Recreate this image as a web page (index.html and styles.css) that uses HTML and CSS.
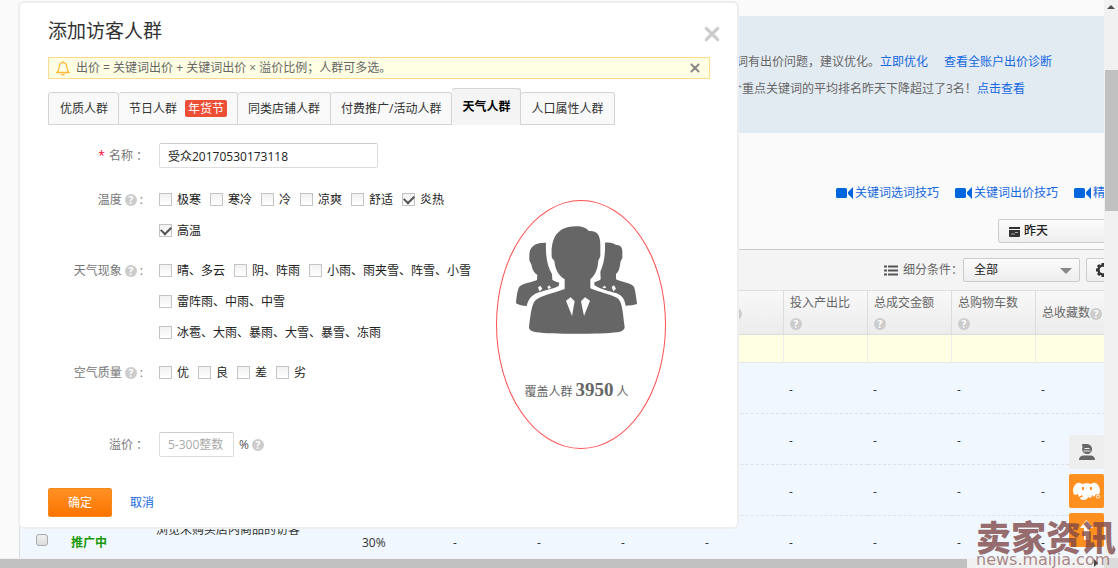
FILE: index.html
```html
<!DOCTYPE html>
<html lang="zh-CN">
<head>
<meta charset="utf-8">
<title>添加访客人群</title>
<link rel="stylesheet" href="styles.css">
</head>
<body>
<svg width="0" height="0" class="defs" aria-hidden="true">
  <symbol id="video" viewBox="0 0 17 12"><path d="M1.500 1h8q1.500 0 1.500 1.500v7q0 1.500-1.500 1.500h-8Q0 11 0 9.500v-7Q0 1 1.500 1zM17 0v12l-5-5V5z" fill="#06d"/></symbol>
  <symbol id="cross" viewBox="0 0 14 14"><path d="M2 2l10 10M12 2L2 12" stroke="currentColor" stroke-width="2.800" stroke-linecap="round"/></symbol>
</svg>
<div class="screen">
  <div class="viewport">
    <main class="page">
      <section class="banner">
        <p>词有出价问题，建议优化。<a href="#">立即优化</a><a href="#" class="next">查看全账户出价诊断</a></p>
        <p>个重点关键词的平均排名昨天下降超过了3名！<a href="#">点击查看</a></p>
      </section>
      <nav class="tips">
        <a href="#"><svg width="17" height="12"><use href="#video"/></svg>关键词选词技巧</a>
        <a href="#"><svg width="17" height="12"><use href="#video"/></svg>关键词出价技巧</a>
        <a href="#"><svg width="17" height="12"><use href="#video"/></svg>精</a>
      </nav>
      <div class="date-row">
        <button class="soft date"><svg width="11" height="11" viewBox="0 0 11 11"><path d="M0 1h11v2H0zM0 4h11v6q0 1-1 1H1q-1 0-1-1z" fill="#333"/><path d="M2 8h4M6 6.500h3" stroke="#aaa"/></svg>昨天</button>
      </div>
      <div class="toolbar">
        <label for="segment"><svg width="14" height="11" viewBox="0 0 14 11"><path d="M0 1.500h3M4 1.500h10M0 5.500h3M4 5.500h10M0 9.500h3M4 9.500h10" stroke="#555" stroke-width="2"/></svg><span>细分条件<span class="colon">：</span></span></label>
        <span class="select-box"><select id="segment" class="soft"><option>全部</option></select></span>
        <button class="soft gear" aria-label="设置"><svg width="16" height="16" viewBox="0 0 16 16"><circle cx="8" cy="8" r="4.500" fill="none" stroke="#333" stroke-width="2.500"/><path d="M8 1v2M8 13v2M1 8h2M13 8h2M3 3l1.500 1.500M11.500 11.500L13 13M3 13l1.500-1.500M11.500 4.500L13 3" stroke="#333" stroke-width="3"/></svg></button>
      </div>
      <table class="data">
        <colgroup><col class="c-check"><col class="c-state"><col class="c-name"><col class="c-bid"><col span="8" class="c-num"></colgroup>
        <thead><tr>
          <th></th><th></th><th></th><th></th><th></th><th></th><th></th><th class="tail"><i class="help">?</i></th>
          <th>投入产出比<br><i class="help">?</i></th><th>总成交金额<br><i class="help">?</i></th><th>总购物车数<br><i class="help">?</i></th><th class="single">总收藏数<i class="help">?</i></th>
        </tr></thead>
        <tbody>
          <tr class="sum"><td></td><td></td><td></td><td></td><td></td><td></td><td></td><td></td><td></td><td></td><td></td><td></td></tr>
          <tr><td></td><td></td><td></td><td></td><td></td><td></td><td></td><td></td><td>-</td><td>-</td><td>-</td><td>-</td></tr>
          <tr><td></td><td></td><td></td><td></td><td></td><td></td><td></td><td></td><td>-</td><td>-</td><td>-</td><td>-</td></tr>
          <tr><td></td><td></td><td></td><td></td><td></td><td></td><td></td><td></td><td>-</td><td>-</td><td>-</td><td>-</td></tr>
          <tr><td class="pick"><input type="checkbox" class="row-check" aria-label="选择推广"></td><td class="state">推广中</td><td class="name">浏览未购买店内商品的访客</td><td>30%</td><td>-</td><td>-</td><td>-</td><td>-</td><td>-</td><td>-</td><td>-</td><td>-</td></tr>
        </tbody>
      </table>
    </main>

    <section class="dialog" role="dialog" aria-labelledby="title">
      <header class="dialog-head">
        <h1 id="title">添加访客人群</h1>
        <button class="plain close" aria-label="关闭"><svg width="16" height="16" viewBox="0 0 14 14"><use href="#cross"/></svg></button>
      </header>
      <div class="notice">
        <svg width="14" height="16" viewBox="0 0 14 16" fill="none" stroke="#ffb83d" stroke-width="1.300"><path d="M7 1v1.500M1 12.500C3 11 3 9 3.200 6.500C3.500 4 5 2.700 7 2.700S10.500 4 10.800 6.500C11 9 11 11 13 12.500zM5.500 14q1.500 1.600 3 0"/></svg>
        <span>出价 = 关键词出价 + 关键词出价 × 溢价比例<span class="colon">；</span>人群可多选。</span>
        <button class="plain dismiss" aria-label="关闭提示"><svg width="10" height="10" viewBox="0 0 14 14"><use href="#cross"/></svg></button>
      </div>
      <div class="tabs" role="tablist">
        <button role="tab">优质人群</button>
        <button role="tab">节日人群<span class="badge">年货节</span></button>
        <button role="tab">同类店铺人群</button>
        <button role="tab">付费推广/活动人群</button>
        <button role="tab" class="active" aria-selected="true">天气人群</button>
        <button role="tab">人口属性人群</button>
      </div>
      <form class="body">
        <div class="fields">
          <div class="field name-field"><label class="label" for="name"><b class="req">*</b>名称<span class="colon">：</span></label><input id="name" class="text" type="text" value="受众20170530173118"></div>
          <div class="field" role="group" aria-label="温度"><span class="label hinted">温度<i class="help">?</i>:</span>
            <div class="options">
              <label><input type="checkbox">极寒</label><label><input type="checkbox">寒冷</label><label><input type="checkbox">冷</label><label><input type="checkbox">凉爽</label><label><input type="checkbox">舒适</label><label><input type="checkbox" checked>炎热</label><label><input type="checkbox" checked>高温</label>
            </div></div>
          <div class="field" role="group" aria-label="天气现象"><span class="label hinted">天气现象<i class="help">?</i>:</span>
            <div class="options">
              <label><input type="checkbox">晴、多云</label><label><input type="checkbox">阴、阵雨</label><label><input type="checkbox">小雨、雨夹雪、阵雪、小雪</label><label><input type="checkbox">雷阵雨、中雨、中雪</label><label><input type="checkbox">冰雹、大雨、暴雨、大雪、暴雪、冻雨</label>
            </div></div>
          <div class="field" role="group" aria-label="空气质量"><span class="label hinted">空气质量<i class="help">?</i>:</span>
            <div class="options">
              <label><input type="checkbox">优</label><label><input type="checkbox">良</label><label><input type="checkbox">差</label><label><input type="checkbox">劣</label>
            </div></div>
          <div class="field premium"><label class="label" for="premium">溢价<span class="colon">：</span></label><input id="premium" class="text short" type="text" placeholder="5-300整数"><span class="unit">%<i class="help">?</i></span></div>
        </div>
        <div class="reach">
          <svg width="121" height="108" viewBox="438 138 363 324" fill="#666">
            <path d="M545 228C542 165 570 140 615 139C637 137 650 145 657 153C682 151 691 165 691 195V228C690 235 687 234 685 242C683 270 675 285 661 298V325C690 337 720 343 740 353C755 362 757 380 764 440C764 450 755 455 740 457C700 463 540 463 500 457C485 454 477 450 477 440C482 400 485 375 495 362C510 347 550 340 584 327V298C565 285 556 270 553 242C548 236 545 235 545 228Z"/>
            <path d="M528 188C495 187 478 200 478 225V240C480 248 484 250 485 258C488 272 494 280 502 285L501 300C480 308 460 310 448 320C442 330 440 350 438 370C445 375 458 378 470 378C476 352 490 342 510 336C535 328 555 325 566 318L568 308C558 306 550 302 547 300L546 282C533 262 526 230 528 188Z"/>
            <path d="M705 188C720 186 732 190 738 195C752 195 757 202 757 215V235C755 240 752 240 751 250C748 270 745 277 738 282V298C755 306 780 308 792 320C797 335 799 355 801 372C790 376 778 377 767 377C763 355 757 348 740 340C715 332 690 328 673 315V307C682 304 688 302 692 298L691 275C702 250 706 225 705 188Z"/>
            <path fill="#fff" d="M588 362L602 352L614 364L606 408ZM633 364L645 352L660 362L642 408ZM504 322L512 317L517 327L508 334ZM532 321L538 316L543 323L536 327ZM697 322L704 317L709 323L702 325ZM725 321L732 316L738 326L730 334Z"/>
          </svg>
          <p>覆盖人群 <strong>3950</strong> 人</p>
        </div>
      </form>
      <footer class="actions"><button class="ok">确定</button><a href="#">取消</a></footer>
    </section>

    <aside class="float">
      <button aria-label="客服"><svg width="18" height="18" viewBox="0 0 18 18"><path d="M4 1h5a5 5 0 1 1-4.500 3z" fill="#666"/><path d="M6.500 5.500h5M5.500 8h7" stroke="#eee" stroke-width="1.200"/><path d="M1 17q0-4 4-4.500h8q4 .5 4 4.500z" fill="#666"/></svg></button>
      <button class="hot" aria-label="助手"><svg width="29" height="19" viewBox="0 0 29 19"><path fill="#fff" d="M1 9C1 5 4 0 8 1L10 2C13 1 17 1 19 2L21 1C25 0 28 5 28 9C28 12 26 13 24 12L22 15L20 13L19 16L16 15C15 18 12 19 8 17L9 15L11 15L10 13L7 15L6 12L3 13Q1 12 1 9Z"/><path d="M11 5v3M19 5v3" stroke="#ff9020" stroke-width="2"/><circle cx="26" cy="14.500" r="1.600" fill="none" stroke="#fff"/></svg></button>
      <button class="hot" aria-label="返回顶部"><svg width="15" height="20" viewBox="0 0 15 20"><path fill="#fff" d="M7.500 0L14 8h-4v12H5V8H1z"/></svg></button>
    </aside>
  </div>
  <div class="vbar" aria-hidden="true"><span class="up"></span><span class="vthumb"></span></div>
  <div class="hbar" aria-hidden="true"><span class="hthumb"></span><span class="right"></span></div>
  <div class="corner"></div>
  <div class="watermark"><strong>卖家资讯</strong><span>news.maijia.com</span></div>
</div>
</body>
</html>
```
FILE: styles.css
```css
* { box-sizing: border-box; }
body {
  margin: 0;
  background: #fafafa;
  color: #333;
  font: 12px/18px "Open Sans", "Noto Sans CJK SC", sans-serif;
}
button, input, select { font: inherit; color: inherit; margin: 0; }
button { cursor: pointer; }
p, h1 { margin: 0; }
svg { flex: none; }
a { color: #1468e0; text-decoration: none; }
.defs { position: absolute; }
.colon { font-family: "Noto Sans CJK TC", sans-serif; line-height: 1; }

.screen {
  position: relative;
  display: grid;
  grid-template-columns: minmax(0, 1fr) 14px;
  grid-template-rows: minmax(0, 1fr) 10px;
  height: 100vh;
  overflow: hidden;
}
.viewport { position: relative; overflow: hidden; }

/* page behind the dialog */
.page { padding: 16px 0 0 19px; white-space: nowrap; }
.banner {
  height: 117px;
  padding: 32px 0 0 717px;
  background: #e3ebf2;
  color: #666;
  line-height: 27px;
}
.banner p + p { margin-left: -6px; }
.banner .next { margin-left: 16px; }
.tips { display: flex; gap: 16px; padding: 51px 0 0 817px; }
.tips a { display: flex; align-items: center; gap: 2px; }
.soft {
  border: 1px solid #ccc;
  border-radius: 2px;
  background: linear-gradient(#fbfbfb, #eee);
  color: #222;
}
.date-row { display: flex; justify-content: flex-end; padding: 17px 0 6px; }
.date {
  display: flex;
  align-items: center;
  gap: 4px;
  width: 120px;
  height: 24px;
  margin-right: -14px;
  padding: 0 10px;
  font-weight: 500;
}
.toolbar {
  display: flex;
  justify-content: flex-end;
  align-items: center;
  height: 41px;
  margin-right: -14px;
  border-top: 1px solid #ccc;
  background: #f4f4f4;
  color: #666;
}
.toolbar label { display: flex; align-items: center; gap: 5px; }
.select-box { position: relative; margin-right: 6px; }
.select-box::after {
  content: "";
  position: absolute;
  top: 10px;
  right: 8px;
  border: 6px solid transparent;
  border-top-color: #888;
  border-bottom: 0;
  pointer-events: none;
}
.select-box select {
  appearance: none;
  display: block;
  width: 117px;
  height: 24px;
  padding: 0 10px;
}
.gear { display: flex; align-items: center; width: 32px; height: 24px; padding: 0 8px; }

.data { width: 1100px; table-layout: fixed; border-collapse: separate; border-spacing: 0; border-left: 1px solid #ddd; }
.c-check { width: 46px; }
.c-state { width: 85px; }
.c-name { width: 206px; }
.c-bid { width: 91px; }
.c-num { width: 84px; }
.data th {
  height: 45px;
  padding: 0 0 0 6px;
  border-top: 1px solid #ddd;
  border-right: 1px solid #ddd;
  border-bottom: 1px solid #ddd;
  background: linear-gradient(#f8f8f8, #ececec);
  color: #666;
  font-weight: normal;
  text-align: left;
  line-height: 21px;
}
.data .tail { padding-left: 30px; }
.data .single { white-space: nowrap; }
.data td { height: 51px; padding: 3px 0 0 5px; background: #f0f7fe; border-bottom: 1px dashed #dde2e6; }
.data .sum td { height: 28px; padding: 0; background: #ffffe3; border-right: 1px solid #eee; border-bottom: 1px solid #e4e8ea; }
.data .pick { padding-left: 16px; }
.data .state { color: #1a9a0a; font-weight: bold; }
.data .name { vertical-align: top; padding-top: 5px; }
.row-check {
  appearance: none;
  display: block;
  width: 12px;
  height: 12px;
  margin-bottom: 6px;
  border: 1px solid #aaa;
  border-radius: 3px;
  background: linear-gradient(#eee, #ddd);
}
.help {
  display: inline-block;
  flex: none;
  width: 12px;
  height: 12px;
  border-radius: 50%;
  background: #ccc;
  color: #fff;
  font-size: 10px;
  font-style: normal;
  font-weight: bold;
  line-height: 12px;
  text-align: center;
  vertical-align: middle;
}

/* dialog */
.dialog {
  position: absolute;
  top: 1px;
  left: 18px;
  width: 721px;
  padding: 12px 27px 10px 28px;
  border: 2px solid #eee;
  border-radius: 6px;
  background: #fff;
}
.dialog-head { display: flex; justify-content: space-between; align-items: center; height: 32px; }
.dialog-head h1 { font-size: 19px; font-weight: normal; line-height: 28px; }
.plain { display: flex; padding: 0; border: 0; background: none; }
.close { color: #ccc; padding-top: 6px; margin-right: -10px; }
.notice {
  display: flex;
  align-items: center;
  gap: 6px;
  height: 22px;
  margin-top: 10px;
  padding: 0 9px 0 7px;
  border: 1px solid #ffd98c;
  background: #ffffe3;
  color: #666;
}
.dismiss { margin-left: auto; color: #888; }
.tabs { display: flex; align-items: flex-end; height: 37px; margin-top: 9px; }
.tabs button {
  height: 33px;
  padding: 0 10px;
  border: 1px solid #d4d4d4;
  border-left-width: 0;
  border-radius: 3px 3px 0 0;
  background: #f9f9f9;
  white-space: nowrap;
}
.tabs button:first-child { border-left-width: 1px; padding-left: 11px; }
.tabs .active { height: 37px; border-bottom: 0; background: #f4f4f4; color: #000; font-weight: bold; }
.badge {
  display: inline-block;
  margin-left: 8px;
  padding: 0 3px;
  border-radius: 2px;
  background: #ec4f36;
  color: #fff;
  line-height: 17px;
}
.body { display: flex; gap: 16px; }
.fields { width: 432px; padding-top: 18px; }
.field { display: flex; align-items: flex-start; gap: 14px; margin-bottom: 9px; }
.label {
  display: flex;
  justify-content: flex-end;
  align-items: center;
  flex: none;
  width: 97px;
  height: 31px;
  color: #777;
  white-space: nowrap;
}
.hinted { gap: 3px; padding-right: 2px; }
.req { margin-right: 4px; color: #f03; font-weight: normal; }
.text {
  width: 219px;
  height: 25px;
  padding: 0 8px;
  border: 1px solid #ddd;
  border-top-color: #ccc;
  border-radius: 2px;
  background: #fff;
  color: #222;
}
.text::placeholder { color: #aaa; }
.name-field { align-items: center; height: 25px; margin-bottom: 16px; }
.short { width: 75px; }
.options { display: flex; flex-wrap: wrap; column-gap: 9px; width: 320px; }
.options label { display: flex; align-items: center; gap: 5px; height: 31px; color: #222; white-space: nowrap; }
.options input {
  appearance: none;
  display: grid;
  place-items: center;
  width: 13px;
  height: 13px;
  border: 1px solid #c4c4c4;
  background: linear-gradient(#f1f1f1, #fff);
}
.options input:checked::after {
  content: "";
  width: 8px;
  height: 5px;
  margin-bottom: 3px;
  border: solid #555;
  border-width: 0 0 2px 2px;
  rotate: -45deg;
}
.premium { align-items: center; gap: 0; margin: 41px 0 0; }
.premium .text { margin-left: 14px; }
.unit { margin-left: 5px; color: #555; }
.unit .help { margin-left: 3px; }
.reach {
  display: flex;
  flex-direction: column;
  align-items: center;
  flex: none;
  width: 170px;
  height: 249px;
  margin-top: 75px;
  padding: 25px 9px 0 0;
  border: 1px solid #ff5050;
  border-radius: 50%;
  color: #666;
}
.reach p { margin-top: 44px; white-space: nowrap; }
.reach strong { font: bold 19px/24px "Liberation Serif", serif; }
.actions { display: flex; align-items: center; gap: 18px; margin-top: 28px; }
.ok {
  width: 64px;
  height: 29px;
  border: 1px solid #f58a1a;
  border-radius: 2px;
  background: linear-gradient(#ff9124, #fb7400);
  color: #fff;
}

/* floating shortcuts */
.float { position: absolute; right: 0; bottom: 11px; display: grid; gap: 5px; }
.float button {
  display: grid;
  place-items: center;
  width: 35px;
  height: 34px;
  padding: 0;
  border: 0;
  border-radius: 2px;
  background: #eee;
}
.float .hot { background: #ff9020; }

/* scrollbars */
.vbar { display: flex; flex-direction: column; align-items: center; background: #f1f1f1; }
.up { margin-top: 5px; border: 4px solid transparent; border-top: 0; border-bottom-color: #505050; }
.vthumb { width: 13px; height: 141px; margin-top: 61px; margin-left: 1px; background: #c1c1c1; }
.hbar { display: flex; align-items: center; justify-content: space-between; background: #f1f1f1; }
.hthumb { width: 967px; height: 9px; background: #c1c1c1; align-self: flex-end; }
.right { margin-right: 6px; border: 4px solid transparent; border-right: 0; border-left-color: #444; }
.corner { background: #dcdcdc; }
.watermark {
  position: absolute;
  right: 2px;
  bottom: 0;
  color: rgba(125, 70, 70, .78);
  pointer-events: none;
}
.watermark strong { display: block; font-size: 35px; font-weight: 900; line-height: 28px; }
.watermark span { display: block; font: 16px/16px "DejaVu Sans", sans-serif; opacity: .8; }
```
